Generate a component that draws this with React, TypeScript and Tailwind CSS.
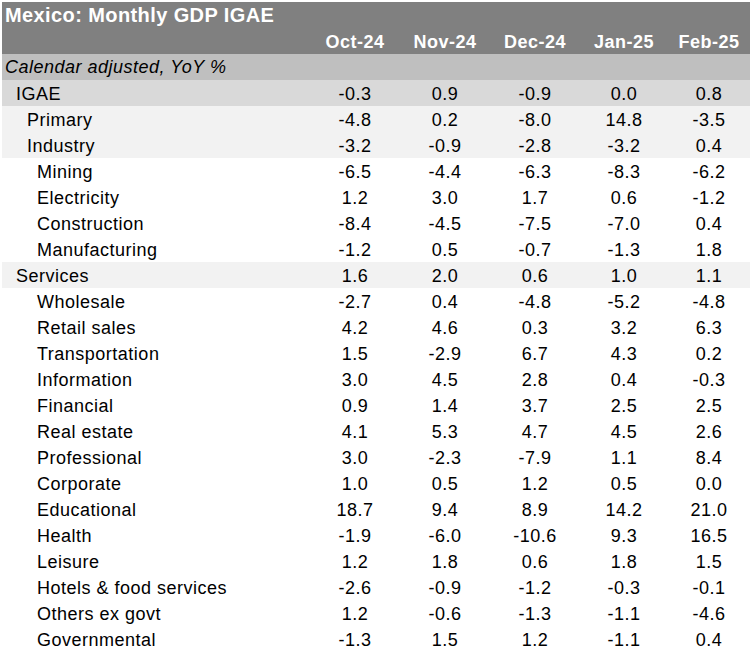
const months = ['Oct-24', 'Nov-24', 'Dec-24', 'Jan-25', 'Feb-25'];

type Row = { label: string; level: 0 | 1 | 2; bg: string; values: string[] };

const rows: Row[] = [
  { label: 'IGAE', level: 0, bg: 'bg-[#d9d9d9]', values: ['-0.3', '0.9', '-0.9', '0.0', '0.8'] },
  { label: 'Primary', level: 1, bg: 'bg-[#f2f2f2]', values: ['-4.8', '0.2', '-8.0', '14.8', '-3.5'] },
  { label: 'Industry', level: 1, bg: 'bg-[#f2f2f2]', values: ['-3.2', '-0.9', '-2.8', '-3.2', '0.4'] },
  { label: 'Mining', level: 2, bg: 'bg-white', values: ['-6.5', '-4.4', '-6.3', '-8.3', '-6.2'] },
  { label: 'Electricity', level: 2, bg: 'bg-white', values: ['1.2', '3.0', '1.7', '0.6', '-1.2'] },
  { label: 'Construction', level: 2, bg: 'bg-white', values: ['-8.4', '-4.5', '-7.5', '-7.0', '0.4'] },
  { label: 'Manufacturing', level: 2, bg: 'bg-white', values: ['-1.2', '0.5', '-0.7', '-1.3', '1.8'] },
  { label: 'Services', level: 0, bg: 'bg-[#f2f2f2]', values: ['1.6', '2.0', '0.6', '1.0', '1.1'] },
  { label: 'Wholesale', level: 2, bg: 'bg-white', values: ['-2.7', '0.4', '-4.8', '-5.2', '-4.8'] },
  { label: 'Retail sales', level: 2, bg: 'bg-white', values: ['4.2', '4.6', '0.3', '3.2', '6.3'] },
  { label: 'Transportation', level: 2, bg: 'bg-white', values: ['1.5', '-2.9', '6.7', '4.3', '0.2'] },
  { label: 'Information', level: 2, bg: 'bg-white', values: ['3.0', '4.5', '2.8', '0.4', '-0.3'] },
  { label: 'Financial', level: 2, bg: 'bg-white', values: ['0.9', '1.4', '3.7', '2.5', '2.5'] },
  { label: 'Real estate', level: 2, bg: 'bg-white', values: ['4.1', '5.3', '4.7', '4.5', '2.6'] },
  { label: 'Professional', level: 2, bg: 'bg-white', values: ['3.0', '-2.3', '-7.9', '1.1', '8.4'] },
  { label: 'Corporate', level: 2, bg: 'bg-white', values: ['1.0', '0.5', '1.2', '0.5', '0.0'] },
  { label: 'Educational', level: 2, bg: 'bg-white', values: ['18.7', '9.4', '8.9', '14.2', '21.0'] },
  { label: 'Health', level: 2, bg: 'bg-white', values: ['-1.9', '-6.0', '-10.6', '9.3', '16.5'] },
  { label: 'Leisure', level: 2, bg: 'bg-white', values: ['1.2', '1.8', '0.6', '1.8', '1.5'] },
  { label: 'Hotels & food services', level: 2, bg: 'bg-white', values: ['-2.6', '-0.9', '-1.2', '-0.3', '-0.1'] },
  { label: 'Others ex govt', level: 2, bg: 'bg-white', values: ['1.2', '-0.6', '-1.3', '-1.1', '-4.6'] },
  { label: 'Governmental', level: 2, bg: 'bg-white', values: ['-1.3', '1.5', '1.2', '-1.1', '0.4'] },
];

const indent = ['pl-[14px]', 'pl-[25px]', 'pl-[35px]'];
const cols = 'grid grid-cols-[308px_90px_90px_90px_88px_82px]';

export default function App() {
  return (
    <div className="min-h-[654px] bg-white pt-[2px] pl-[2px] font-['Liberation_Sans',Arial,sans-serif] text-[18px] tracking-[0.5px] text-black">
      <div className="w-[748px]">
        <div className="bg-[#808080] text-white font-bold">
          <div className="h-[26px] pl-[3px] text-[20px] tracking-[0.4px] leading-[26px]">Mexico: Monthly GDP IGAE</div>
          <div className={`${cols} h-[26px] leading-[28px]`}>
            <div />
            {months.map((m) => (
              <div key={m} className="text-center">{m}</div>
            ))}
          </div>
        </div>
        <div className="h-[26px] bg-[#bfbfbf] pl-[3px] italic leading-[27px]">Calendar adjusted, YoY %</div>
        {rows.map((r) => (
          <div key={r.label} className={`${cols} h-[26px] leading-[29px] ${r.bg}`}>
            <div className={indent[r.level]}>{r.label}</div>
            {r.values.map((v, i) => (
              <div key={i} className="text-center">{v}</div>
            ))}
          </div>
        ))}
      </div>
    </div>
  );
}
